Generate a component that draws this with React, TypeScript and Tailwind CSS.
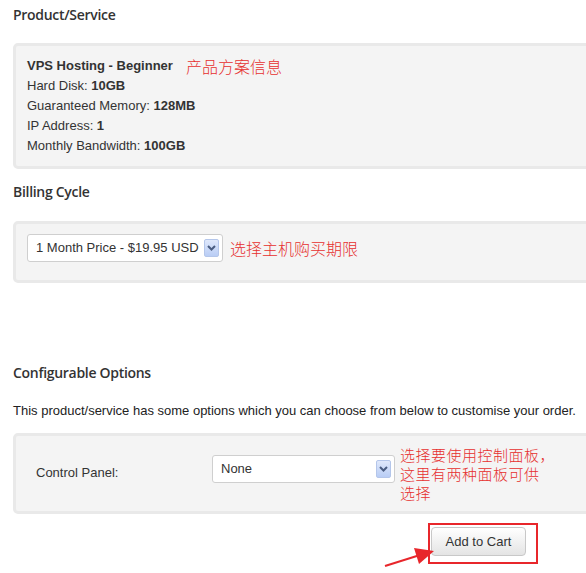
import React from "react";

const Chevron = () => (
  <span className="flex h-[18px] w-[15px] items-center justify-center rounded-[2px] border border-[#b4c6ea] bg-gradient-to-b from-[#dfe8fb] to-[#b9cdf5]">
    <svg width="9" height="6" viewBox="0 0 9 6">
      <path d="M1 1 L4.5 4.5 L8 1" fill="none" stroke="#4a5d82" strokeWidth="2" />
    </svg>
  </span>
);

const Select = ({ text, className }: { text: string; className: string }) => (
  <div
    className={
      "flex h-[28px] items-center justify-between rounded-[3px] border border-[#cfcfcf] bg-white pl-[8px] pr-[3px] text-[13px] text-[#333] " +
      className
    }
  >
    <span>{text}</span>
    <Chevron />
  </div>
);

const Red = "text-[#e6302f] font-['Noto_Sans_CJK_SC',sans-serif] font-light";

export default function App() {
  return (
    <div className="relative h-[573px] w-[586px] overflow-hidden bg-white pl-[13px] font-['Liberation_Sans',Arial,sans-serif] text-[#333]">
      <h3 className="pt-[5px] font-['Open_Sans',sans-serif] text-[14px] font-semibold leading-[20px] tracking-[-0.3px] text-[#333]">
        Product/Service
      </h3>
      <div className="relative mt-[18px] h-[126px] w-[600px] rounded-[5px] border-[3px] border-[#e9e9e9] bg-[#f4f4f4] pl-[11px] pt-[10px] text-[13px] leading-[20px]">
        <div className="flex items-center">
          <b>VPS Hosting - Beginner</b>
          <span className={Red + " ml-[13px] text-[16px] leading-[20px]"}>产品方案信息</span>
        </div>
        <div>
          Hard Disk: <b>10GB</b>
        </div>
        <div>
          Guaranteed Memory: <b>128MB</b>
        </div>
        <div>
          IP Address: <b>1</b>
        </div>
        <div>
          Monthly Bandwidth: <b>100GB</b>
        </div>
      </div>
      <h3 className="mt-[13px] font-['Open_Sans',sans-serif] text-[14px] font-semibold leading-[20px] tracking-[-0.3px] text-[#333]">
        Billing Cycle
      </h3>
      <div className="mt-[19px] flex h-[62px] w-[600px] items-start rounded-[5px] border-[3px] border-[#e9e9e9] bg-[#f4f4f4] pl-[11px] pt-[10px]">
        <Select text="1 Month Price - $19.95 USD" className="w-[196px]" />
        <span className={Red + " ml-[7px] mt-[4px] text-[16px] leading-[20px]"}>选择主机购买期限</span>
      </div>
      <h3 className="mt-[80px] font-['Open_Sans',sans-serif] text-[14px] font-semibold leading-[20px] tracking-[-0.3px] text-[#333]">
        Configurable Options
      </h3>
      <p className="mt-[18px] text-[13px] leading-[20px] text-[#222]">
        This product/service has some options which you can choose from below to customise your order.
      </p>
      <div className="relative mt-[12px] flex h-[81px] w-[600px] items-start rounded-[5px] border-[3px] border-[#e9e9e9] bg-[#f4f4f4] pl-[20px] pt-[19px]">
        <span className="mt-[10px] w-[176px] text-[13px] leading-[16px]">Control Panel:</span>
        <Select text="None" className="w-[183px]" />
        <div className={Red + " ml-[5px] -mt-[10px] text-[15px] leading-[19px] tracking-[0.5px]"}>
          选择要使用控制面板，
          <br />
          这里有两种面板可供
          <br />
          选择
        </div>
      </div>
      <div className="mt-[13px] flex pl-[418px]">
        <button className="h-[29px] w-[95px] rounded-[4px] border border-[#c8c8c8] bg-gradient-to-b from-white to-[#e4e4e4] text-[13px] text-[#333]">
          Add to Cart
        </button>
      </div>
      <div className="absolute left-[428px] top-[523px] h-[41px] w-[110px] border-2 border-[#e8262b]" />
      <svg className="absolute left-0 top-0" width="586" height="573">
        <line x1="385" y1="566" x2="420" y2="555" stroke="#e8262b" strokeWidth="2" />
        <polygon points="434,551 419,564 414,548" fill="#e8262b" />
      </svg>
    </div>
  );
}
